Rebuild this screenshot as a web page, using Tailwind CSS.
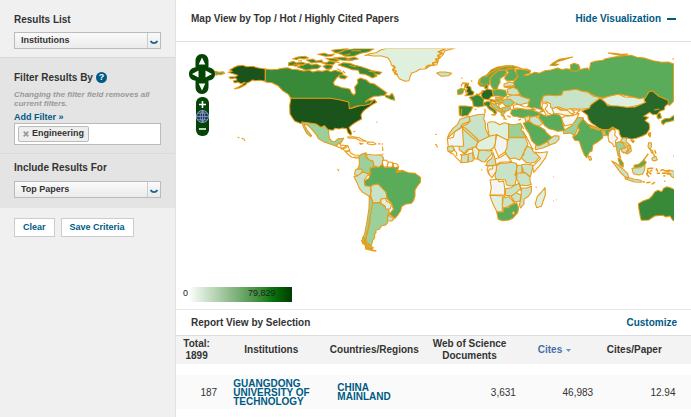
<!DOCTYPE html>
<html lang="en">
<head>
    <meta charset="UTF-8">
    <meta name="viewport" content="width=device-width, initial-scale=1.0">
    <title>Essential Science Indicators</title>
    <script src="https://cdn.jsdelivr.net/npm/@tailwindcss/browser@4"></script>
</head>
<body class="bg-white font-['Liberation_Sans',Arial,sans-serif] text-[10px] text-[#333]">
<div class="flex min-h-screen">

    <!-- Filters -->
    <aside class="w-44 shrink-0 bg-[#f0f0f0] border-r border-[#e2e2e2] font-bold">
        <section class="px-3.5 pt-3.5 pb-2 border-b border-[#d8d8d8]">
            <label for="results" class="block leading-3 mb-1.5">Results List</label>
            <div class="relative">
                <select id="results" class="block appearance-none w-full h-[17px] pl-1.5 pr-5 border border-[#bbb] bg-linear-to-b from-[#fafafa] to-[#ebebeb] text-[9px] font-bold">
                    <option>Institutions</option>
                    <option>Researchers</option>
                </select>
                <svg class="absolute right-0 top-0 w-3.5 h-[17px] pointer-events-none" viewBox="0 0 14 17" fill="none"><path d="M.5 1v15" stroke="#ccc"/><path d="M3.500 9q1.500 2.200 3.500 2.200T10.500 9" stroke="#17658c" stroke-width="1.800"/></svg>
            </div>
        </section>

        <section class="px-3.5 pt-3 pb-2 bg-[#e4e4e4] border-b border-[#dadada]">
            <div class="flex items-center gap-[3px] h-3.5">
                <label for="filter">Filter Results By</label>
                <button type="button" aria-label="Help" class="w-[11px] h-[11px] rounded-full bg-[#005a84] text-white text-[9px] leading-[11px]">?</button>
            </div>
            <p class="mt-1.5 text-[8px] leading-[9px] italic text-[#999]">Changing the filter field removes all current filters.</p>
            <a href="#" class="block mt-[3px] text-[9px] leading-3 text-[#005a84]">Add Filter »</a>
            <div class="flex items-center h-[22px] px-[3px] border border-[#bbb] bg-white">
                <span class="flex items-center gap-[3px] h-4 px-1 border border-[#bbb] rounded-[2px] bg-[#eee] text-[9px]">
                    <button type="button" aria-label="Remove Engineering">
                        <svg class="w-[6px] h-[6px]" viewBox="0 0 6 6"><path d="M.7.7l4.600 4.600M5.300.7L.7 5.300" stroke="#999" stroke-width="1.700"/></svg>
                    </button>
                    Engineering
                </span>
                <input id="filter" type="text" class="min-w-0 flex-1 outline-none">
            </div>
        </section>

        <section class="px-3.5 pt-2 pb-2.5 bg-[#e4e4e4]">
            <label for="include" class="block leading-3 mb-[7px]">Include Results For</label>
            <div class="relative">
                <select id="include" class="block appearance-none w-full h-[17px] pl-1.5 pr-5 border border-[#bbb] bg-linear-to-b from-[#fafafa] to-[#ebebeb] text-[9px] font-bold">
                    <option>Top Papers</option>
                    <option>Hot Papers</option>
                </select>
                <svg class="absolute right-0 top-0 w-3.5 h-[17px] pointer-events-none" viewBox="0 0 14 17" fill="none"><path d="M.5 1v15" stroke="#ccc"/><path d="M3.500 9q1.500 2.200 3.500 2.200T10.500 9" stroke="#17658c" stroke-width="1.800"/></svg>
            </div>
        </section>

        <div class="flex gap-1.5 px-3.5 pt-2.5 text-[9px] text-[#005a84]">
            <button type="button" class="h-[19px] px-2 border border-[#ccc] bg-white font-bold">Clear</button>
            <button type="button" class="h-[19px] px-2 border border-[#ccc] bg-white font-bold">Save Criteria</button>
        </div>
    </aside>

    <main class="flex-1 min-w-0">
        <header class="flex items-center justify-between h-[42px] px-[15px] pb-1 border-b border-[#e0e0e0] font-bold">
            <h2>Map View by Top / Hot / Highly Cited Papers</h2>
            <a href="#" class="flex items-center gap-1.5 text-[#005a84]">Hide Visualization <span class="w-[9px] h-0.5 bg-[#005a84]"></span></a>
        </header>

        <!-- Map -->
        <div class="relative">
            <svg class="block w-full h-auto" viewBox="176 42 515 242" stroke="#eb9a12" stroke-width="3.200" stroke-linejoin="round">
                <defs><clipPath id="world"><path d="M176 48.500h498v236H176z"/></clipPath></defs>
                <g clip-path="url(#world)">
                    <!-- North America -->
                    <g transform="translate(176 40) scale(.33333)">
                        <g fill="#1b541b">
                            <path d="M157 97l12-3-8-4 14-8 8-4 17-2 12 4 18-1 14 4 24 4v37l-18-3-12 1-8-2-8 5-9 4-4 5-17 9-17 4 12-6 10-5 11-9-14 4-8-5-10 3-4-6 11-3-4-6-16 2-4-5 19-1 7-4z"/>
                            <path d="M345 173h125l14 2 14 4 12 3 14 3 3 20 21-7 12-5 12-3 12-9 12-2 6 8-12 6-13 9-10 7-7 7-5 9 2 12-11 6-10 6-10 7-7 7 5 9 3 10-3 4-8-8-4-12-13-2-10 3-12-2-6 6-12-2-10 8-9-13-13-1-10-8-20-2-25-3-15-6-7-9-8-13-1-25z"/>
                        </g>
                        <g fill="#388a38">
                            <path d="M268 87l18 2 19-1 14-3 16-2 12 5 18 1 18 4 17-2 10 5 15-4 14 2 16-4 8 5 14-4 14 4 10 4-4 8-14 5-5 7-6 9 4 8 10 3 12 4 12 2 12 3 4 10 7 7 6-6-3-18 10-12-2-10 9-5 18 6 10 9 14 3 17 12 20 14-6 8-16 2-16 1-16 8-10 9 12-6 12 2-10 10-15 4-24 2-23 8-2-20-28-7-28-4H345l-8-12-17-11-14-15-18-9-20-2z"/>
                            <path d="M630 165l10 3 8-8 6 10 2 11-12-3-8-4-8-4z"/>
                            <path d="M338 68l14-4 10 5 14-3 12 4-6 6-14-2-8 5-12-3-10 1zM364 81l15-7 18-4 10 5 14-3 14 7-10 7-18 1-17 4-11-5zM350 56l16-5 20-2 12 4-14 4-14-2-8 4zM391 60l20-3 10 6 16-3 4 6-20 1-14 2zM425 43l20-3 14 4 16-2-7 6-20 1zM450 55l26 1 14 4-8 4-18-2zM487 75l14-7 20 2 16 6 18 4 18 6 16 6 28 5-6 6-16-1 8 6-14 6-10-6-12-5-16-2-4-10-18-2-14-5zM441 79l15-6 14 4-4 9-14 2zM432 67l20 1 8-5 18 4-5 6-18 1zM484 39l20-8 30-5 60 0-16 9-24 5-20 8-27 1-8-5zM473 53l22-1 24 3 18-3 10 5-27 5-24-2zM488 106l12-2 14 6-8 7-14-3zM467 31l30-4 20-2-20 10-18 4z"/>
                            <path d="M500 47l24-6M510 58l20 3M526 32l30 0M491 68l-12-2M378 61l-12 3M352 73l24 0M578 94l20 3M520 76l20 5M484 86l12 8M500 92l8 8M456 92l8-8" fill="none"/>
                        </g>
                        <path fill="#dff0df" d="M566 47l15-6 19-3 14-8 18-5h205l-30 7-7 14-12 10-5 18-20 3-15 10-17 1-12 7-12 4-4 9-4 14-12 2-17-8-9-14-8-6-4-8 7-6-10-7-2-9-9-13-18-5-24 0-20-3z"/>
                        <path d="M650 76l7 6-5 8 8 3-3 9 9 2M807 27l-20 9 12 4-14 7 7 6-13 5 6 7-15 4 4 6-18 2-8 7" stroke-width="5" fill="none"/>
                        <path fill="#9bd09b" d="M377 246l18 2 25 4 15 10 10-5 12 13 3 25 8 9 9 1 9-9 17-1-6 10-6 9-11 4-20-7-18-6-15-9-4-9-18-22-11-10-10-3 9 18 14 17-3 3-12-10-8-15z"/>
                        <g fill="#fff">
                            <path d="M480 318l9-9 5 6 22 2 7 21 12 7 15 1 8 10-9-3-11 1-12-3-14-12-12-13-12-4zM494 315l2 13 13-4 7-7M505 333l16 0"/>
                            <path d="M515 291l18-1 16 3 13 7 9 4-18-2-14-7-22-1zM574 306l18 1 8 5-12 2-14-3zM551 309l10 2-8 2zM606 311l8 1M619 310v4M619 320l2 11M618 341l4 3M532 276l6-2M601 246l3 1"/>
                        </g>
                        <path fill="#58aa58" d="M115 93l14 4 12-2 5 5-12 4-8-1-6 3z"/>
                        <path d="M185 292l5 2M197 294l7 4 3 5M484 387l3 2" fill="none"/>
                    </g>

                    <!-- South America -->
                    <g transform="translate(330 140) scale(.33333)">
                        <path fill="#9bd09b" d="M87 48l9-6 12-4-2 14 10 5 12 4 4 15-5 7-7 4-2 20-18-11-17-9 5-13zM128 188l22 1 26 18 2 10-5 10 0 21-6 7-13 3-6 10-10 2 0 8-4 5v10l-6 8-3 14-13 2-5-7-1-12 7-20 5-34zM118 168l4 4 6 16-5 25-5 42-8 24-2 26 12 10 10 9-8 4-14-8-13-17 9-22 7-36 6-40z"/>
                        <g fill="#c8e3c8">
                            <path d="M108 42l16 2 14 1 15-1 7 9 0 12-10 17-10-1-8-4-3-14-13-4-5-10zM78 88l16-1 4 9-14 10-10-1 1-10zM72 110l12-3 13-12 19 7-13 18 5 14 14 5 2 14-4 17-22-13-10-12-7-17zM122 137l20-6 9 8 18 13 1 23-16 2-6 11-19-1-7-19zM175 225l17 11-7 7-13-1z"/>
                        </g>
                        <path fill="#5aac5a" d="M120 85l15-5 11 2 14-10 5 11 15-1 16-5 9 3-2 14 13-3 19 7 20 2 17 12-1 15-8 10-8 13v18l-5 15-6 7-18 3-11 7-3 12-7 11-10 12-17-13 12-14-5-18-13-13-4-20-23-25-16 2-7 5-17-2-2-14 14-8 4-14z"/>
                        <path fill="#fff" d="M157 62l10-2 8 6-4 14-10 1-3-9zM175 67l12 0 1 13-13 2-3-8zM188 69l15 4 2 7-12 4zM34 26l14-7M47 37l12-6M72 51l14 1"/>
                        <path fill="#dff0df" d="M152 178l14-3 4 9 15 8-4 14-13 2-3-10-11-7z"/>
                        <path d="M98 290l7 10-5 8 9 5-2 9 13 2M105 325l24 6 10 2M113 321l13 7M96 301l4 12M198 97l18-5M199 92l16 3" stroke-width="5" fill="none"/>
                        <path d="M24 90l3 3M157 30l2 2M315 13l4 1 3 6M320 22l2 1" fill="none"/>
                    </g>

                    <!-- Europe and Asia -->
                    <g transform="translate(430 40) scale(.33333)">
                        <path fill="#5aac5a" d="M258 88l22 1 22 3-3 8-17 5 9 2 18-8 6-2 13 3 17-8 18-2 20-6 13 5 12-3 34 4 30-6 6 6 4-22 14-4 22-3 9-5 26-5 28-4 22-1 18 6 22 2 26 8 26 5 20-1 16 6v111l-12 13-10-4 5-11-25-9-22-17-13 3-5 22-38-8-42-9-50 10-20-3-27-14-33-6-40 5-4 11-56 3-5 13-3 16 13 14-10 4-24-9-17-7 5-18-24-13-12-15-13-10-1-15 14-16-4-14z"/>
                        <path d="M360 76l10-8 18-10 23-4 17-3-26 8-20 6-8 7 12 1-10 4zM535 39l18 1 20 3 20-1-13 5-22-3zM421 75l11-5 14 4 4 12-10 8-18-1z" fill="#5aac5a"/>
                        <path fill="#c8e3c8" d="M340 168l16-3 20 2 19-2 4-12 40-5 16 6 20 3 12 10 18 5 10 6-23 10-10 16-27 4-30-2-12 6-12-6-16-6-12 8-11-6-1-11-12-5-14 0z"/>
                        <path fill="#dff0df" d="M515 176l22-7 28-6 20 8 25 1 18 4 14-3 8 9-10 11-22 4-28 6-20-3-25-1-20-9z"/>
                        <path fill="#286828" d="M455 213l23-8 4-10 12-9 16-11 15 11 8 11 30 1 27 4 25-1 32-14-5-7 15-25 11-2 18 16 28 12 1 10-10 8-2 10-14 5-6 9-15 1-9-7-18 12 14 3-10 10 12 8 2 12-2 8-8 12-12 6-16 6-16 4-14-4-16 0-6-11-2-12-13-6-16 5-27-2-16-12-10-6-10-12-2-12-8-6z"/>
                        <path d="M603 301l10 2-4 5zM658 280l4-2-2 13-4-5z" fill="#286828"/>
                        <path fill="#388a38" d="M682 222l9-2 3 13-9 4-4-6zM695 242l10-6 15-1 10-8 4 2-2 12-15 4-11 2-6 7-5-5zM672 210l16-3"/>
                        <g fill="#5aac5a">
                            <path d="M440 235l16-2 8 10 8 8 30 13 18 6 16-1 12-8 8 6-10 18-7 5-18-10-3 14-15 12-14 8-3 19-8 4-8 16-7-8-9-22-6-20-14-2-6-10 13-8 7-14-6-10z"/>
                            <path d="M328 218l10 6 12 5 20-8 18 4 8 9 2 15 6 23-22 2-12-5-14-3-13-10-7-12-9-10z"/>
                            <path d="M245 209l14-1 14-4 18 5 26 1 12 8-3 9-20 3-14 0-14 4-16-4-14-2-6-8z"/>
                            <path d="M280 250l14-6 20 8 16 9 14 8 6 10 14 12 12-1-9 11-20 7-12 9-14 1-16-16-8-22-10-15z"/>
                            <path d="M147 120l8-8 14-6 14-16 20-9 24-4 22 1 15 5-20 3-18 4-20 2-16 12-10 12-2 18-12 6-16-2-6-8zM180 113l14-14 14-10 18 1 4 8-8 10-12 8 0 12-5 8-3 10-11 3-8-11-2-12zM228 88l12-4 14 3 1 8 9 13-12 13-20 2-8-7 2-8 10-10z"/>
                            <path d="M188 151l14-3 25 3 4 15-9 6-16-4-16 0z"/>
                        </g>
                        <g fill="#388a38">
                            <path d="M118 172l14-4 10-5 20 12-2 14 4 8-14 3-6 1-14-3-2-14zM87 198l20 0 22 3-6 12-10 13-16 3-9-4zM160 188l14-4 10 4-5 9 18 14 3 7-5 7-5-10-12-7-9-11-8-2zM95 206l-1 18"/>
                            <path d="M82 151l12-6 8 4-4 12-14 3z" fill="#5aac5a"/>
                            <path d="M156 152l10-1 4-5 16 4 4 17-8 4-6 8-18-3-4-10z" fill="#286828"/>
                            <path d="M106 129l10 1-2 8 8 3 2 10 8 5-3 9-24 2 9-8-6-5 4-8-8-6z" fill="#286828"/>
                            <path d="M163 144l3-10 7-2 1 11-5 4zM178 178l18 3 14-3-8 9-20-2z"/>
                        </g>
                        <g fill="#c8e3c8">
                            <path d="M230 171l14-5 22-1 10 5 24 8-5 10-16 4-12 3-10-6-12-1-14-8zM232 148l18-6 12 6 8 14-18 4-18-3zM222 132l16-6 13 2 2 11-18 4-13-2zM300 232l16-4 12 8 10 15-12 8-16-6-12-10zM284 232l14-5 1 12-12 7zM316 318l12-1 24-12 7 10-18 8-24 6zM353 303l20-16 14 1 0 10-12 12-17 5zM20 99l10-3 16 0 19 4-9 7-22 2zM476 348l6 2 3 9-6 2-3-7z"/>
                        </g>
                        <g fill="#9bd09b">
                            <path d="M222 178l20 0 10 10-7 9-18 1-10-10zM196 183l18-7 5 8-8 9-15-3zM400 272l24-14 20-26 17 2-16 20-4 17-8 17-10-9-22 2zM197 172l24 1-6 7-18-2zM182 190l16 3 6 9 12 6-5 9-12-7-14-13zM216 203l24-4 2 9-12 5-12-1zM213 215l14 0-7 8 4 10-10-7z"/>
                            <path d="M479 259l24 5 14 5-10 2-26-8zM515 272l10 0 3 15-9-1z"/>
                        </g>
                        <g fill="#f3f8f3">
                            <path d="M395 234l14-8 18 1 20-7-6 14-12 18-24 6-7-12zM366 207l12-5 14 9 20 0 10 9 10 5-20 4-16-6-24-3zM375 200l24 10 22-4 14 12-12 4M310 202l28 8-10 8-16-6M425 210l26 0-12 10"/>
                        </g>
                        <path d="M338 190l12 0 3 7-8 9 10 14 7 2-2 5-12-2-6-13-7-10zM250 196l14-3 18 7 16 1 18 8-34-2-22-3-9 2z" fill="#fff"/>
                        <path d="M93 139l5-10 14 2-3 8-8 8 8 5-2 8M124 121l2 4M94 114l3 0M165 206v14M134 209l5-2M184 224l12 1M220 236l10 2M265 240l8-2M242 232l-10-5M152 114l-5 14 11 6M167 112l8-9 14-9 16-9 20-5 24-2 14 4M160 154l-14 10-8-2M180 184l22-3 12 8M205 190l4 18M224 140l28-2" fill="none" stroke-width="4"/>
                        <path d="M262 82l14 5 14 1 12 5" fill="none" stroke-width="5"/>
                        <path d="M16 282l4 2M98 325l2-1M727 57h5" fill="none"/>
                    </g>

                    <!-- Africa -->
                    <g transform="translate(440 120) scale(.33333)">
                        <g fill="#c8e3c8">
                            <path d="M22 54l6-14 10-14 14-12 8-16 12-4 14-5 5 14-10 10-14 6-22 16zM62 20l6-8 22-8-2-14 24-6 22-2-3 15 5 10 0 18 12 25-32 18-22-18zM68 22l10 3 37 35-6 20-14 3-10 8-9 11-18-12-1-9zM206 53h50l8 20-10 16-3 15-12 16-16-6-14 2-10-12-4-15zM262 78l12 6 8 14 20 8-16 20-14 4-14-3-14-13 8-18zM115 92l14-3 16 4 12-2-4 14-10 11-8 10-8-1-14-8z"/>
                            <path d="M65 106l20-3-2 24-20 1zM85 101l13-3 2 24-15 4zM141 126l15-12 3-17 6 18 3 20-28 2zM170 136l12-7 14 1 18-3 14 3 4 9-5 18 2 18-4 20-14 3-12-4-2-14-28-2-4-8zM230 136l14 0 6 16-8 6-12 1zM245 134l14-2 20 4-4 20-4 14-13-10-12-6zM231 158l26 1 13 12 0 12 4 10-14 4-20-2-10-18zM196 206l18-3 10-7 14-6 4 16-16 14-12 8-18-2zM245 204l16 0 13-6 0 18-8 12-14 10 0 14-10 12-4-9 5-20 1-20zM213 229l16-11 14 7-3 18-16 3zM189 234l18-4 16 18-12 8-18 9-6-4z"/>
                        </g>
                        <g fill="#dff0df">
                            <path d="M142 10l8-5 15 1 14 8 14-6 13 4v47h-12l-24-15-22 4-4-20zM115 65l33-16 20-5-2 28-6 12-10 6-34 0-8-8zM150 226l45 2-8 5 0 42-16 1-8-16-8-18zM97 85l10-6 10 14-5 24-8 0-4-14zM315 203l1 22-12 34-14 4-4-12 6-22 10-10z"/>
                        </g>
                        <g fill="#f3f5f3">
                            <path d="M22 56l18-4 4-17 24-14v18l3 40-30 0-16 4zM170 44l32 16-1 22-6 14-20 14-8-20-3-8zM165 117l18-6 14-10 18 24-34 2-13 7zM150 180l24-2 3 7 14-1 3 20 0 21-44 0 4-22zM285 96l16 2 22-3-6 18-18 24-18 20-3-18 24-24zM158 137l12-2-2 20-12 18-12-14 4-12 10 0z"/>
                        </g>
                        <path fill="#9bd09b" d="M206 12l16 2 20-4 5 12-4 6 17 24h-54z"/>
                        <path fill="#5aac5a" d="M170 276l20 0 1-12 13-1 10-8 16-7 6 16-3 14-14 16-12 6-20 2-12-4z"/>
                        <path fill="#c8e3c8" d="M22 82l14-5 8 12-12 9-8-4z"/>
                        <circle cx="220" cy="279" r="4" fill="#dff0df"/>
                        <path d="M24 94l14 0M30 98l10 4 8 10 10 10 6 6M40 88l10 10 0 10M60 104l12-3 12-14 14 2M135 136l10 2-4 10 8 18M146 138h14M127 148l-3 3M228 160l-4 4 7 3M236 190l8 16-3 6M278 88l-4-6 8 6" fill="none"/>
                        <path d="M244 14l8 14M249 34l12 20 14 28M339 170h2M339 243l2-1M348 239h2M287 201l3 2" fill="none"/>
                    </g>

                    <!-- South-east Asia and Australia -->
                    <g transform="translate(560 110) scale(.33333)">
                        <path fill="#388a38" d="M235 281l14-8 19-7 8-8 8-12 10-5 11 4 6-10 10-5 12 4 8 4h9v95l-12-2-8-13-12 3-10-5-24 2-18 12-22 1-3-10-4-22z"/>
                        <path fill="#f3f5f3" d="M147 66l13-11 6 10-2 10 9 10-7 8 3 14-7 3-6-10-9-5-3-14z"/>
                        <path fill="#9bd09b" d="M167 99l10-4 12 4 8 13-12 4-6 3-1 10 4 16-8-8-3-14z"/>
                        <path fill="#5aac5a" d="M174 145l8 3 8 12-1 12-9-6zM222 166l14-3 16-14 7 9-10 12-14 2-12 1z"/>
                        <g fill="#c8e3c8">
                            <path d="M155 153l12 6 14 12 10 8 12 12 3 12-12-3-14-14-10-14zM195 204l12-1 16 5 20 3 1 6-20-1-26-8zM216 175l10-1 13-1 16-8-1 14-6 13-12 3-16-4zM185 116l12-2 8-9 6 8-8 13-12 3-6-6zM188 84l12 0-2 10 14 14 2 15-12 9-5-2 8-14-10-16-14-6z"/>
                            <path d="M343 184l-14-4-10 2 8 8 8 10 8 4z"/>
                        </g>
                        <path fill="#c8e3c8" d="M266 98l8 0 0 12-5 8-5-8zM272 118l6 4 2 10-7-6zM276 144l12-5 4 10-8 4-8-3z"/>
                        <path d="M261 178l9-3 10 0M263 180l-2 17M265 185l9 8M270 184l7-4M259 189l8 12M284 121l4 10M265 131l-6 8-9 12M281 133l3 7M247 214l8 3M259 218l12-1M275 223l10-7M289 175l4 10M291 180l-4-2M290 190l10 0M301 183l6-4 10 4 12 1M306 190l10-1 8 3 10 0M310 198l6-1M313 213l3 1M340 138h3M190 170l-4-6M264 74l4-5 2 8" fill="none" stroke-width="4.500"/>
                    </g>
                </g>
            </svg>

            <!-- Pan and zoom -->
            <div class="absolute left-[13px] top-3 w-[26px] flex flex-col items-center gap-[3px]">
                <button type="button" aria-label="Pan map" class="block">
                    <svg class="block w-[26px] h-10" viewBox="0 0 26 40"><path d="M13 0c4 0 6.500 3 6.500 7v6.500C23 13.500 26 16 26 20s-3 6.500-6.500 6.500V33c0 4-2.500 7-6.500 7s-6.500-3-6.500-7v-6.500C3 26.500 0 24 0 20s3-6.500 6.500-6.500V7c0-4 2.500-7 6.500-7z" fill="#044404"/><path d="M13 3.500l3.300 7H9.700zM13 36.500l3.300-7H9.700zM3 20l6.500-3.500v7zM23 20l-6.500-3.500v7z" fill="#fff"/></svg>
                </button>
                <button type="button" aria-label="Zoom map" class="block">
                    <svg class="block w-[13px] h-[39px]" viewBox="0 0 13 39" fill="none"><rect width="13" height="39" rx="6" fill="#044404"/><path d="M3 7.500h7M6.500 4v7M3 32h7" stroke="#fff" stroke-width="1.600"/><circle cx="6.500" cy="19.500" r="6" fill="#1d3a3a" stroke="#8f9fe0"/><path d="M.8 19.500h11.400M6.500 13.500v12M2 16.200h9M2 22.800h9M6.500 13.500q-5 6 0 12M6.500 13.500q5 6 0 12" stroke="#8f9fe0" stroke-width=".8"/></svg>
                </button>
            </div>

            <div class="flex w-[109px] h-[15px] mt-[3px] mb-[7px] ml-[7px] gap-[60px] bg-linear-to-r from-white from-5% via-[#0a7a10] via-80% to-[#003c00] text-[9px] leading-3 text-[#222]">
                <span>0</span><span>79,829</span>
            </div>
        </div>

        <!-- Report -->
        <header class="flex items-center justify-between h-[27px] pl-[15px] pr-3.5 border-y border-t-[#e8e8e8] border-b-[#ddd] font-bold">
            <h2>Report View by Selection</h2>
            <a href="#" class="text-[#005a84]">Customize</a>
        </header>
        <table class="w-full table-fixed">
            <thead class="bg-[#f3f3f3]">
                <tr class="h-7 leading-3">
                    <th class="w-[8%]">Total: 1899</th>
                    <th class="w-[21%]">Institutions</th>
                    <th class="w-[19%]">Countries/Regions</th>
                    <th class="w-[18%]">Web of Science Documents</th>
                    <th class="w-[15%]"><button type="button" class="inline-flex items-center gap-1 font-bold text-[#4371a8]">Cites <svg class="w-[5px] h-[3px]" viewBox="0 0 5 3"><path d="M0 0h5L2.500 3z" fill="#5b95d6"/></svg></button></th>
                    <th class="w-[16%]">Cites/Paper</th>
                    <th class="w-[3%]"></th>
                </tr>
            </thead>
            <tbody>
                <tr class="h-[11px]" aria-hidden="true"><td colspan="7"></td></tr>
                <tr class="h-[34px] bg-[#fafafa] text-right">
                    <td>187</td>
                    <td class="pl-4 text-left font-bold leading-[9px] text-[#005a84]"><a href="#">GUANGDONG UNIVERSITY OF TECHNOLOGY</a></td>
                    <td class="pl-3 text-left font-bold leading-[9px] text-[#005a84]"><a href="#">CHINA MAINLAND</a></td>
                    <td>3,631</td>
                    <td>46,983</td>
                    <td>12.94</td>
                    <td></td>
                </tr>
            </tbody>
        </table>
    </main>
</div>
</body>
</html>
